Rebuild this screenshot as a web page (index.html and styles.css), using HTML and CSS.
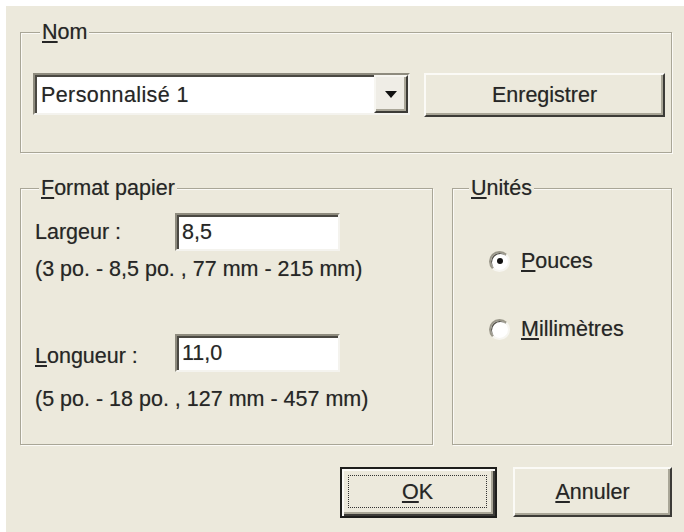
FILE: index.html
```html
<!DOCTYPE html>
<html lang="fr">
<head>
<meta charset="utf-8">
<title>Format personnalisé</title>
<link rel="stylesheet" href="styles.css">
</head>
<body>
<div class="dialog">
  <div class="group group-nom">
    <span class="legend"><u>N</u>om</span>
    <div class="nom-row">
      <div class="combo">
        <span class="combo-text">Personnalisé 1</span>
        <span class="combo-btn"><svg class="arrow" width="12" height="7" viewBox="0 0 12 7"><path d="M0 0H12L6 7Z" fill="#111"/></svg></span>
      </div>
      <button class="btn btn-save">Enregistrer</button>
    </div>
  </div>

  <div class="row2">
    <div class="group group-format">
      <span class="legend"><u>F</u>ormat papier</span>
      <div class="field field-1">
        <span class="field-label">Largeur :</span>
        <div class="input">8,5</div>
      </div>
      <div class="range range-1">(3 po. - 8,5 po. , 77 mm - 215 mm)</div>
      <div class="field field-2">
        <span class="field-label"><u>L</u>ongueur :</span>
        <div class="input">11,0</div>
      </div>
      <div class="range range-2">(5 po. - 18 po. , 127 mm - 457 mm)</div>
    </div>

    <div class="group group-units">
      <span class="legend"><u>U</u>nités</span>
      <div class="radio radio-1">
        <span class="radio-circle"><span class="radio-dot"></span></span>
        <span class="radio-label"><u>P</u>ouces</span>
      </div>
      <div class="radio radio-2">
        <span class="radio-circle"></span>
        <span class="radio-label"><u>M</u>illimètres</span>
      </div>
    </div>
  </div>

  <div class="buttons">
    <button class="btn btn-ok"><span class="focus"><u>O</u>K</span></button>
    <button class="btn btn-cancel"><u>A</u>nnuler</button>
  </div>
</div>
</body>
</html>
```

FILE: styles.css
```css
html, body {
  margin: 0;
  padding: 0;
  background: #ffffff;
}

body {
  width: 684px;
  height: 532px;
  overflow: hidden;
  font-family: "Liberation Sans", Arial, sans-serif;
  font-size: 21.5px;
  color: #262626;
  text-shadow: 0 0 0.7px rgba(0, 0, 0, 0.35);
}

u {
  text-decoration: underline;
  text-decoration-thickness: 2px;
  text-underline-offset: 2px;
}

.dialog {
  margin: 6px 0 0 6px;
  width: 678px;
  height: 526px;
  box-sizing: border-box;
  background: #ece9dc;
  padding: 26px 0 0 14px;
}

.group {
  position: relative;
  box-sizing: border-box;
  border: 1px solid #a9a697;
  box-shadow: inset 1px 1px 0 #fbfaf6, 1px 1px 0 #fbfaf6;
}

.legend {
  position: absolute;
  top: -13px;
  left: 19px;
  padding: 0 2px;
  line-height: 24px;
  background: #ece9dc;
  white-space: nowrap;
}

.group-nom {
  width: 652px;
  height: 121px;
  padding: 40px 0 0 12px;
}

.nom-row {
  display: flex;
  align-items: flex-start;
  gap: 14px;
}

.combo {
  box-sizing: border-box;
  width: 377px;
  height: 42px;
  display: flex;
  align-items: stretch;
  background: #fff;
  border-style: solid;
  border-width: 2px;
  border-color: #8e8b7e #f4f3ee #f4f3ee #8e8b7e;
  box-shadow: inset 2px 2px 0 #4a4842;
}

.combo-text {
  flex: 1;
  padding-left: 6px;
  line-height: 38px;
  padding-top: 1px;
  letter-spacing: 0.4px;
}

.combo-btn {
  width: 34px;
  box-sizing: border-box;
  display: flex;
  align-items: center;
  justify-content: center;
  background: #efede6;
  border-style: solid;
  border-width: 2px;
  border-color: #f7f6f1 #3c3b37 #3c3b37 #f7f6f1;
  box-shadow: inset -2px -2px 0 #aaa799;
}

.btn {
  box-sizing: border-box;
  font-family: inherit;
  font-size: inherit;
  color: inherit;
  text-shadow: inherit;
  background: #ece9dc;
  border-style: solid;
  border-width: 2px;
  border-color: #fbfaf6 #3c3b37 #3c3b37 #fbfaf6;
  box-shadow: inset -2px -2px 0 #a9a697;
  padding: 0;
  margin: 0;
  line-height: 24px;
  cursor: default;
}

.btn-save {
  width: 241px;
  height: 44px;
}

.row2 {
  display: flex;
  gap: 19px;
  margin-top: 35px;
}

.group-format {
  width: 413px;
  height: 257px;
  padding: 0 0 0 14px;
}

.group-units {
  width: 220px;
  height: 257px;
  padding: 0 0 0 36px;
}

.group-units .legend {
  left: 16px;
}

.group-format .legend {
  left: 18px;
}

.field {
  display: flex;
  align-items: center;
}

.field-1 {
  margin-top: 24px;
}

.field-2 {
  margin-top: 53px;
}

.field-label {
  width: 140px;
  line-height: 24px;
}

.field-2 .field-label {
  padding-top: 6px;
}

.input {
  box-sizing: border-box;
  width: 165px;
  height: 38px;
  background: #fff;
  border-style: solid;
  border-width: 2px;
  border-color: #8e8b7e #f4f3ee #f4f3ee #8e8b7e;
  box-shadow: inset 2px 2px 0 #4a4842;
  padding-left: 5px;
  line-height: 34px;
}

.range {
  line-height: 24px;
  white-space: nowrap;
}

.range-1 {
  margin-top: 6px;
}

.range-2 {
  margin-top: 15px;
}

.radio {
  display: flex;
  align-items: center;
  gap: 11px;
  line-height: 24px;
}

.radio-1 {
  margin-top: 60px;
}

.radio-2 {
  margin-top: 44px;
}

.radio-circle {
  box-sizing: border-box;
  width: 21px;
  height: 21px;
  border-radius: 50%;
  background: #fff;
  border: 2px solid;
  border-color: #9a978a #f7f6f1 #f7f6f1 #9a978a;
  box-shadow: inset 1px 1px 0 #55534c;
  display: flex;
  align-items: center;
  justify-content: center;
}

.radio-dot {
  width: 6px;
  height: 6px;
  border-radius: 50%;
  background: #111;
}

.buttons {
  display: flex;
  justify-content: flex-end;
  gap: 16px;
  margin-top: 22px;
  padding-right: 12px;
}

.btn-ok {
  width: 157px;
  height: 51px;
  border: 2px solid #1e1e1c;
  box-shadow: inset 2px 2px 0 #fbfaf6, inset -2px -2px 0 #3c3b37, inset -4px -4px 0 #a9a697;
  display: flex;
  align-items: center;
  justify-content: center;
  padding: 6px 8px 8px 6px;
}

.focus {
  flex: 1;
  align-self: stretch;
  display: flex;
  align-items: center;
  justify-content: center;
  outline: 1px dotted #333;
  outline-offset: -1px;
}

.btn-cancel {
  width: 159px;
  height: 50px;
}
```
